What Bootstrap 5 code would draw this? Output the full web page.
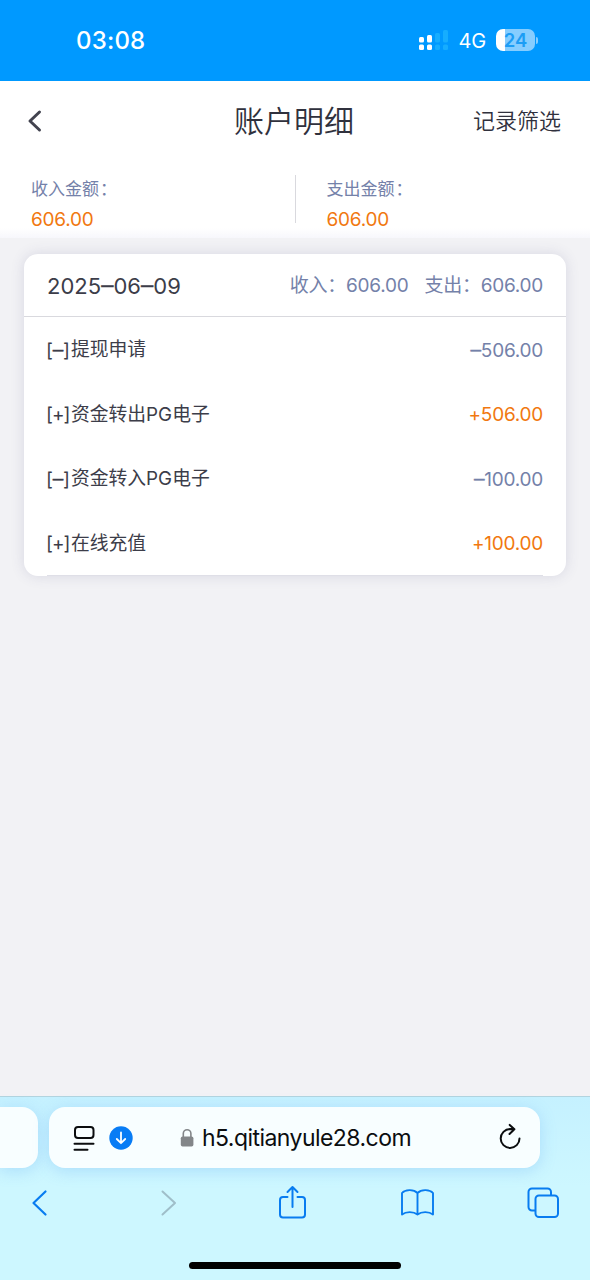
<!DOCTYPE html>
<html lang="zh-CN">
<head>
<meta charset="utf-8">
<meta name="viewport" content="width=device-width, initial-scale=1">
<title>账户明细</title>
<link href="https://cdn.jsdelivr.net/npm/bootstrap@5.3.0/dist/css/bootstrap.min.css" rel="stylesheet">
<style>
  body { font-family: Inter, "Noto Sans CJK SC", sans-serif; background: #f2f2f5; color: #3c3d49; height: 1280px; overflow: hidden; line-height: 1; }
  svg { display: block; flex: none; }
  .statusbar { height: 81px; background: #0099ff; color: #fff; padding: 0 52px 0 76px; }
  .clock { font-size: 24px; font-weight: 500; letter-spacing: .2px; }
  .network { font-size: 20px; letter-spacing: -.2px; margin: 0 10px 0 9px; }
  .battery { width: 39px; height: 22px; margin-top: -1px; border-radius: 7px; background: linear-gradient(90deg, #fff 9px, #85cdff 9px); color: #1c9df5; font-size: 18.5px; font-weight: 600; }
  .battery-tip { width: 2px; height: 7px; border-radius: 0 2px 2px 0; background: #85cdff; margin-left: 1px; }
  .page-head { height: 81px; padding: 0 29px 2px 27px; background: #fff; }
  .page-title { font-size: 30px; font-weight: 350; color: #30313d; }
  .filter-link { font-size: 22px; font-weight: 350; color: #30313d; text-decoration: none; }
  .summary { height: 76px; background: linear-gradient(#fff 66px, #f7f7fc); }
  .summary-item { padding: 17px 31px 0; }
  .summary-rule { width: 1px; height: 48px; margin-top: 13px; background: #d9d9de; }
  .muted-blue { color: #7481a9; }
  .orange { color: #f17810; }
  .summary-label { font-size: 17px; line-height: 20px; }
  .summary-label .colon { margin-left: 1px; }
  .money { font-size: 19px; letter-spacing: -.25px; white-space: nowrap; }
  .summary-item .money { line-height: 22px; margin-top: 10px; }
  .ledger { width: 542px; height: 322px; margin: 16px 24px 0; border: 0; border-radius: 14px; box-shadow: 0 0 14px rgba(70,70,120,.15); color: inherit; }
  .ledger-head { height: 63px; padding: 1px 23px 0; border-bottom: 1px solid #d9d9de; }
  .ledger-date { font-size: 22px; letter-spacing: .02px; padding-top: 1px; }
  .dash { font-family: "Liberation Sans", sans-serif; vertical-align: .09em; line-height: 0; -webkit-text-stroke: .4px; }
  .ledger-row { height: 64.5px; padding: 2px 23px 0 22px; font-size: 19px; }
  .entry-sign { width: 25px; letter-spacing: -.25px; white-space: nowrap; }
  .plus-sign { letter-spacing: -1px; }
  .entry-name { font-size: 18.8px; padding-top: 1px; }
  .ledger-end { height: 1px; margin: 0 23px; background: #dfdfe7; }
  .browser { height: 184px; background: linear-gradient(#c5f1ff, #cdf7ff 90px); border-top: 1px solid #b2d4df; }
  .tabs { height: 61px; margin-top: 10px; }
  .tab-prev { width: 38px; border-radius: 0 16px 16px 0; }
  .tab-prev, .address { background: #f8feff; box-shadow: 0 3px 16px rgba(90,160,240,.28); }
  .address { width: 491px; margin-left: 11px; border-radius: 16px; padding: 0 17px 0 21px; color: #0b0d0f; }
  .host { font-size: 23px; letter-spacing: -.55px; margin-left: 8px; line-height: 30px; padding-top: 1px; }
  .toolbar { padding: 0 30px 0 21px; height: 36px; margin-top: 17px; }
  .home-bar { width: 212px; height: 7px; border-radius: 4px; background: #000; margin: 41px auto 0 189px; }
</style>
</head>
<body class="d-flex flex-column">
<div class="statusbar d-flex align-items-center">
  <span class="clock me-auto">03:08</span>
  <svg width="32" height="22" viewBox="0 0 32 22" fill="#fff"><rect x="1" y="7" width="5" height="5.500" rx="1.500"/><rect x="1" y="14.500" width="5" height="5.500" rx="1.500"/><rect x="9" y="5" width="5" height="7.500" rx="1.500"/><rect x="9" y="14.500" width="5" height="5.500" rx="1.500"/><g fill="#16adff"><rect x="17" y="3" width="5" height="9.500" rx="1.500"/><rect x="17" y="14.500" width="5" height="5.500" rx="1.500"/><rect x="25" y="0" width="5" height="12.500" rx="1.500"/><rect x="25" y="14.500" width="5" height="5.500" rx="1.500"/></g></svg>
  <span class="network">4G</span>
  <span class="battery d-flex align-items-center justify-content-center">24</span><span class="battery-tip"></span>
</div>
<header class="page-head d-flex align-items-center justify-content-between">
  <svg width="88" height="24" viewBox="0 0 88 24" fill="none" stroke="#42434f" stroke-width="3" stroke-linecap="round" stroke-linejoin="round"><path d="M12.500 3 3 12l9.500 9"/></svg>
  <h1 class="page-title m-0">账户明细</h1>
  <a class="filter-link" href="#">记录筛选</a>
</header>
<section class="summary d-flex">
  <div class="summary-item w-50"><div class="summary-label muted-blue">收入金额<span class="colon">：</span></div><div class="money orange">606.00</div></div>
  <div class="summary-rule"></div>
  <div class="summary-item w-50"><div class="summary-label muted-blue">支出金额<span class="colon">：</span></div><div class="money orange">606.00</div></div>
</section>
<main class="card ledger">
  <div class="ledger-head d-flex align-items-center">
    <span class="ledger-date me-auto">2025<span class="dash">–</span>06<span class="dash">–</span>09</span>
    <span class="money muted-blue me-3">收入：606.00</span>
    <span class="money muted-blue">支出：606.00</span>
  </div>
  <div class="ledger-row d-flex align-items-center"><span class="entry-sign">[<span class="dash">–</span>]</span><span class="entry-name me-auto">提现申请</span><span class="money muted-blue"><span class="dash">–</span>506.00</span></div>
  <div class="ledger-row d-flex align-items-center"><span class="entry-sign plus-sign">[+]</span><span class="entry-name me-auto">资金转出PG电子</span><span class="money orange">+506.00</span></div>
  <div class="ledger-row d-flex align-items-center"><span class="entry-sign">[<span class="dash">–</span>]</span><span class="entry-name me-auto">资金转入PG电子</span><span class="money muted-blue"><span class="dash">–</span>100.00</span></div>
  <div class="ledger-row d-flex align-items-center"><span class="entry-sign plus-sign">[+]</span><span class="entry-name me-auto">在线充值</span><span class="money orange">+100.00</span></div>
  <div class="ledger-end"></div>
</main>
<footer class="browser mt-auto">
  <div class="tabs d-flex">
    <div class="tab-prev"></div>
    <div class="address d-flex align-items-center">
      <svg width="28" height="30" viewBox="0 0 28 30" fill="none" stroke="#0b0d0f" stroke-width="2" stroke-linecap="round"><rect x="5" y="4" width="18.500" height="11" rx="3"/><path d="M4.500 20.700h19M4.500 26.700h13"/></svg>
      <svg class="ms-2" width="30" height="30" viewBox="0 0 30 30" fill="none" stroke="#fff" stroke-width="1.800" stroke-linecap="round" stroke-linejoin="round"><circle cx="15" cy="15" r="11.700" fill="#087cf5" stroke="none"/><path d="M15 9.500v10.500M10.800 16l4.200 4.200 4.200-4.200"/></svg>
      <svg style="margin-left:44px" width="14" height="20" viewBox="0 0 14 20"><rect x=".8" y="8.500" width="12.600" height="10" rx="1.800" fill="#838689"/><path d="M3.300 9V5.500a3.800 3.800 0 0 1 7.600 0V9" fill="none" stroke="#838689" stroke-width="1.600"/></svg>
      <span class="host me-auto">h5.qitianyule28.com</span>
      <svg width="26" height="30" viewBox="0 0 26 30" fill="none" stroke="#0b0d0f" stroke-width="2" stroke-linecap="round" stroke-linejoin="round"><path d="M22.500 15.500a9.400 9.400 0 1 1-9.400-9.400l4.300.2M12.700 1.900l4.700 4.400-4.900 4.700"/></svg>
    </div>
  </div>
  <nav class="toolbar d-flex align-items-center justify-content-between">
    <svg width="36" height="36" viewBox="0 0 36 36" fill="none" stroke="#087cf0" stroke-width="2.200" stroke-linecap="round" stroke-linejoin="round"><path d="M24.500 6.500 12.500 18l12 11.500"/></svg>
    <svg width="36" height="36" viewBox="0 0 36 36" fill="none" stroke="#9fbec9" stroke-width="2" stroke-linecap="round" stroke-linejoin="round"><path d="m15.500 6.500 12.500 11.500L15.500 29.500"/></svg>
    <svg width="36" height="36" viewBox="0 0 36 36" fill="none" stroke="#087cf0" stroke-width="2" stroke-linecap="round" stroke-linejoin="round"><path d="M14.500 12H10a3 3 0 0 0-3 3v14.500a3 3 0 0 0 3 3h19a3 3 0 0 0 3-3V15a3 3 0 0 0-3-3h-4.500M19.500 22V2M14.500 7l5-5 5 5"/></svg>
    <svg width="36" height="36" viewBox="0 0 36 36" fill="none" stroke="#087cf0" stroke-width="1.900" stroke-linecap="round" stroke-linejoin="round"><path d="M19.500 8c-4-4.200-12.500-3.500-15.500 0v21.500c4-3.200 11.500-3.200 15.500 0 4-3.200 11.500-3.200 15.500 0V8c-3-3.500-11.500-4.200-15.500 0v21.500"/></svg>
    <svg width="36" height="36" viewBox="0 0 36 36" fill="none" stroke="#087cf0" stroke-width="2"><path d="M11.500 25.500H8a3.500 3.500 0 0 1-3.500-3.500V7A3.500 3.500 0 0 1 8 3.500h15.500A3.500 3.500 0 0 1 27 7v3.500"/><rect x="11.500" y="10.500" width="22.500" height="21.500" rx="3.500"/></svg>
  </nav>
  <div class="home-bar"></div>
</footer>
<script src="https://cdn.jsdelivr.net/npm/bootstrap@5.3.0/dist/js/bootstrap.bundle.min.js"></script>
</body>
</html>
